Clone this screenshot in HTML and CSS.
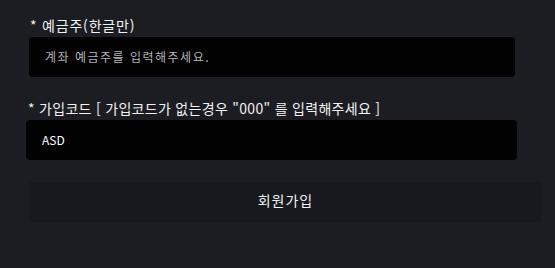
FILE: index.html
```html
<!DOCTYPE html>
<html lang="ko">
<head>
<meta charset="utf-8">
<title>회원가입</title>
<link rel="stylesheet" href="styles.css">
</head>
<body>
<form class="form">
  <div class="field field-name">
    <label class="label" for="holder">* 예금주(한글만)</label>
    <input class="input" id="holder" type="text" placeholder="계좌 예금주를 입력해주세요.">
  </div>
  <div class="field field-code">
    <label class="label" for="code">* 가입코드 [ 가입코드가 없는경우 "000" 를 입력해주세요 ]</label>
    <input class="input" id="code" type="text" value="ASD">
  </div>
  <button class="submit" type="button">회원가입</button>
</form>
</body>
</html>
```

FILE: styles.css
```css
html, body {
  margin: 0;
  padding: 0;
  height: 100%;
}
body {
  background: #1c1d22;
  color: #f0f0f0;
  font-family: "Noto Sans CJK KR", "Noto Sans", sans-serif;
}
.form {
  display: flex;
  flex-direction: column;
  padding: 15px 0 0 29px;
  width: 512px;
}
.field {
  display: flex;
  flex-direction: column;
}
.field-name {
  width: 486px;
}
.field-code {
  width: 491px;
  margin: 21px 0 0 -3px;
}
.label {
  font-size: 14px;
  line-height: 20px;
  height: 20px;
  margin: 0 0 2px 1px;
  color: #f2f2f2;
  white-space: nowrap;
  letter-spacing: 0.3px;
}
.field-name .label {
  letter-spacing: 0.8px;
}
.field-code .label {
  margin-left: 2px;
}
.input {
  box-sizing: border-box;
  height: 40px;
  width: 100%;
  margin: 0;
  padding: 0 16px 2px;
  border: none;
  border-radius: 4px;
  background: #020203;
  color: #ffffff;
  font-family: "Noto Sans CJK KR", "Noto Sans", sans-serif;
  font-size: 12px;
  outline: none;
}
.input::placeholder {
  color: #b4b4b4;
  opacity: 1;
  letter-spacing: 1.5px;
}
.submit {
  box-sizing: border-box;
  margin-top: 22px;
  width: 512px;
  height: 40px;
  border: none;
  border-radius: 3px;
  background: #18191e;
  color: #f2f2f2;
  font-family: "Noto Sans CJK KR", "Noto Sans", sans-serif;
  font-size: 14px;
  letter-spacing: 1px;
  padding: 0 0 4px 1px;
}
```
